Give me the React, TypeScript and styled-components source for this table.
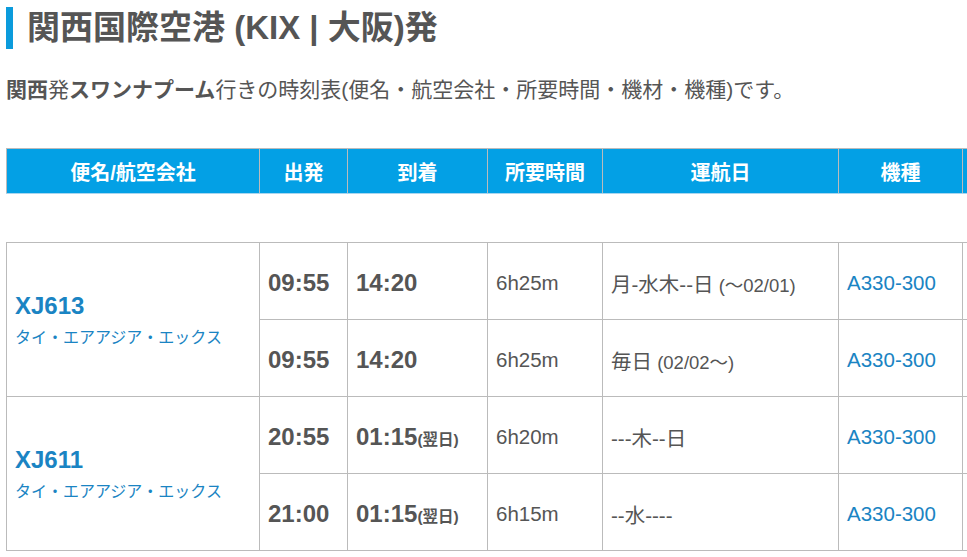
import React from 'react'
import styled, { createGlobalStyle } from 'styled-components'

const GlobalStyle = createGlobalStyle`
  body {
    margin: 0;
    background: #fff;
    font-family: 'Liberation Sans', 'Noto Sans CJK JP', sans-serif;
    color: #555;
  }
`

const Page = styled.div`
  padding: 7px 0 0 6px;
  overflow: hidden;
  width: 961px;
`

const Title = styled.h1`
  margin: 0;
  border-left: 7px solid #0b9bdc;
  padding-left: 14px;
  font-size: 33px;
  line-height: 42px;
  font-weight: bold;
  color: #555;
  white-space: nowrap;
`

const Lead = styled.p`
  margin: 26px 0 0;
  font-size: 21px;
  line-height: 30px;
  color: #555;
  white-space: nowrap;

  b {
    font-weight: bold;
  }
`

const Table = styled.table`
  margin-top: 43px;
  border-collapse: collapse;
`

const HeadCell = styled.th<{ w: number }>`
  width: ${({ w }) => w}px;
  min-width: ${({ w }) => w}px;
  height: 44px;
  padding: 0;
  background: #03a0e5;
  color: #fff;
  font-size: 20px;
  font-weight: bold;
  text-align: center;
  border: 1px solid #bbb;
  border-bottom-color: #a9d6ef;
  white-space: nowrap;
`

const Spacer = styled.td`
  height: 48px;
  padding: 0;
  border: none;
`

const Cell = styled.td`
  height: 73px;
  padding: 3px 8px 0;
  border: 1px solid #bbb;
  vertical-align: middle;
  font-size: 20.5px;
  color: #555;
  white-space: nowrap;
`

const FlightCell = styled(Cell)`
  padding-top: 0;
`

const FlightNo = styled.div`
  font-size: 24px;
  font-weight: bold;
  color: #1a84c3;
  line-height: 28px;
`

const Airline = styled.div`
  margin-top: 8px;
  font-size: 16px;
  line-height: 20px;
  color: #1a84c3;
`

const Time = styled.span`
  font-size: 24px;
  font-weight: bold;
  color: #555;
`

const NextDay = styled.span`
  font-size: 15.5px;
`

const Note = styled.span`
  font-size: 18.5px;
`

const Craft = styled.span`
  color: #1a84c3;
`

type Leg = { dep: string; arr: string; nextDay?: boolean; dur: string; days: string; note?: string; craft: string }
type Flight = { no: string; airline: string; legs: Leg[] }

const flights: Flight[] = [
  {
    no: 'XJ613',
    airline: 'タイ・エアアジア・エックス',
    legs: [
      { dep: '09:55', arr: '14:20', dur: '6h25m', days: '月-水木--日', note: '(～02/01)', craft: 'A330-300' },
      { dep: '09:55', arr: '14:20', dur: '6h25m', days: '毎日', note: '(02/02～)', craft: 'A330-300' },
    ],
  },
  {
    no: 'XJ611',
    airline: 'タイ・エアアジア・エックス',
    legs: [
      { dep: '20:55', arr: '01:15', nextDay: true, dur: '6h20m', days: '---木--日', craft: 'A330-300' },
      { dep: '21:00', arr: '01:15', nextDay: true, dur: '6h15m', days: '--水----', craft: 'A330-300' },
    ],
  },
]

// widths are content widths; each column gets +1px for its collapsed border
const columns: [string, number][] = [
  ['便名/航空会社', 252],
  ['出発', 87],
  ['到着', 139],
  ['所要時間', 114],
  ['運航日', 235],
  ['機種', 123],
  ['', 100],
]

const App: React.FC = () => (
  <>
    <GlobalStyle />
    <Page>
      <Title>関西国際空港 (KIX | 大阪)発</Title>
      <Lead>
        <b>関西</b>発<b>スワンナプーム</b>行きの時刻表(便名・航空会社・所要時間・機材・機種)です。
      </Lead>
      <Table>
        <thead>
          <tr>
            {columns.map(([label, w], i) => (
              <HeadCell key={i} w={w}>{label}</HeadCell>
            ))}
          </tr>
        </thead>
        <tbody>
          <tr>
            <Spacer colSpan={7} />
          </tr>
          {flights.map((f) =>
            f.legs.map((leg, i) => (
              <tr key={f.no + i}>
                {i === 0 && (
                  <FlightCell rowSpan={f.legs.length}>
                    <FlightNo>{f.no}</FlightNo>
                    <Airline>{f.airline}</Airline>
                  </FlightCell>
                )}
                <Cell>
                  <Time>{leg.dep}</Time>
                </Cell>
                <Cell>
                  <Time>
                    {leg.arr}
                    {leg.nextDay && <NextDay>(翌日)</NextDay>}
                  </Time>
                </Cell>
                <Cell>{leg.dur}</Cell>
                <Cell>
                  {leg.days}
                  {leg.note && <Note> {leg.note}</Note>}
                </Cell>
                <Cell>
                  <Craft>{leg.craft}</Craft>
                </Cell>
                <Cell />
              </tr>
            ))
          )}
        </tbody>
      </Table>
    </Page>
  </>
)

export default App
